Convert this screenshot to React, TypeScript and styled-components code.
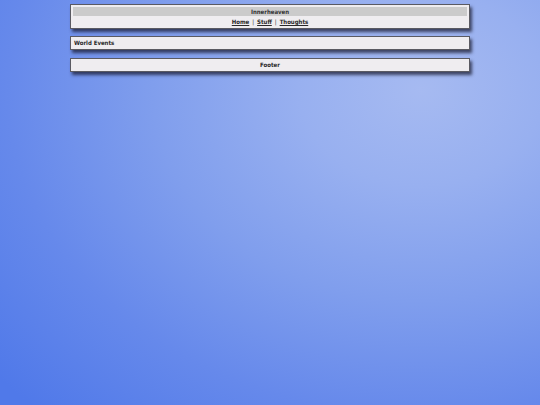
import React from "react";
import styled, { createGlobalStyle } from "styled-components";

const GlobalStyle = createGlobalStyle`
  html, body {
    margin: 0;
    padding: 0;
    min-height: 100%;
  }
  body {
    min-height: 405px;
    font-family: "DejaVu Sans Condensed", "DejaVu Sans", sans-serif;
    font-stretch: condensed;
    background: radial-gradient(
      ellipse 560px 440px at 78% 22%,
      #a6baf1 0%,
      #98b0f0 22%,
      #809eed 48%,
      #6689eb 74%,
      #5079e9 100%
    );
    background-color: #5079e9;
  }
`;

const Page = styled.div`
  width: 400px;
  margin: 0 auto;
  padding-top: 4px;
  display: flex;
  flex-direction: column;
  gap: 7px;
`;

const Box = styled.div<{ $tight?: boolean }>`
  box-sizing: border-box;
  background: #efedf0;
  border: 1px solid #5a5a62;
  box-shadow: 2px 3px 3px rgba(20, 20, 40, 0.7);
  padding: ${(p) => (p.$tight ? "0 2px" : "1px 2px")};
  font-size: 6px;
  font-weight: bold;
  color: #2a2a2a;
`;

const Banner = styled.div`
  background: #cbcbcb;
  height: 9px;
  line-height: 9px;
  text-align: center;
  margin-top: 1px;
  color: #333;
`;

const Nav = styled.div`
  height: 11px;
  line-height: 11px;
  text-align: center;
`;

const NavLink = styled.a`
  color: #2a2a2a;
  text-decoration: underline;
`;

const Sep = styled.span`
  font-weight: normal;
  margin: 0 3px;
`;

const Row = styled.div<{ $center?: boolean }>`
  height: 12px;
  line-height: 12px;
  padding-left: ${(p) => (p.$center ? "0" : "1px")};
  text-align: ${(p) => (p.$center ? "center" : "left")};
`;

export default function App() {
  return (
    <>
      <GlobalStyle />
      <Page>
        <Box>
          <Banner>Innerheaven</Banner>
          <Nav>
            <NavLink href="#">Home</NavLink>
            <Sep>|</Sep>
            <NavLink href="#">Stuff</NavLink>
            <Sep>|</Sep>
            <NavLink href="#">Thoughts</NavLink>
          </Nav>
        </Box>
        <Box $tight>
          <Row>World Events</Row>
        </Box>
        <Box $tight style={{ marginTop: 1 }}>
          <Row $center>Footer</Row>
        </Box>
      </Page>
    </>
  );
}
